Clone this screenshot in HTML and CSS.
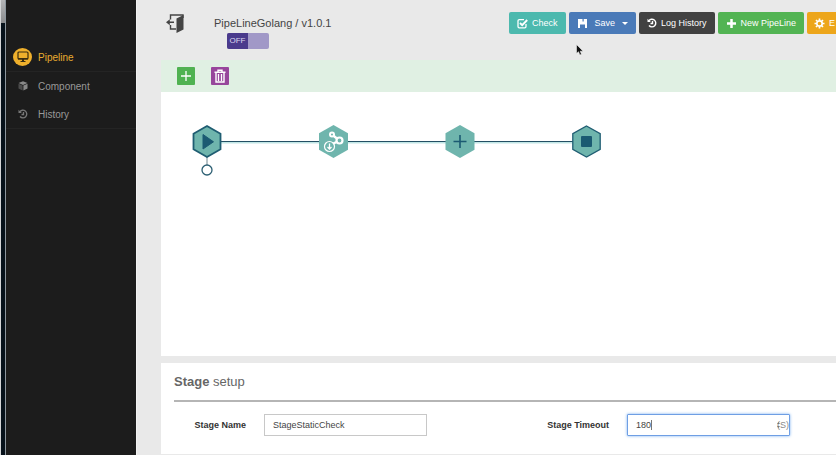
FILE: index.html
```html
<!DOCTYPE html>
<html lang="en">
<head>
<meta charset="utf-8">
<title>PipeLineGolang</title>
<link rel="stylesheet" href="styles.css">
</head>
<body>
<div class="edge"></div>
<aside class="sidebar">
  <nav class="menu">
    <a class="menu-item active" href="#">
      <span class="menu-icon"><svg width="12" height="12" viewBox="0 0 12 12"><rect x="1" y="1" width="10" height="7" rx="1" fill="none" stroke="#3a2d10" stroke-width="1.2"/><path d="M1 7h10v1.5H1zM5 8h2v2h1.5v1h-5v-1H5z" fill="#3a2d10"/></svg></span>
      Pipeline
    </a>
    <a class="menu-item" href="#">
      <span class="menu-icon"><svg width="10" height="10" viewBox="0 0 10 10"><path d="M5 .2 9.5 2 5 4 .5 2z" fill="#888"/><path d="M.5 2.8 4.6 4.6v5L.5 7.6z" fill="#4c4c4c"/><path d="M9.5 2.8 5.4 4.6v5l4.1-2z" fill="#888"/></svg></span>
      Component
    </a>
    <a class="menu-item" href="#">
      <span class="menu-icon"><svg width="10" height="10" viewBox="0 0 12 12" fill="none" stroke="#777" stroke-width="1.6"><path d="M2 3.6A4.6 4.6 0 1 1 2.4 9M6.6 3.6v3H4.2"/><path d="M.6.8v4h4z" fill="#777" stroke="none"/></svg></span>
      History
    </a>
  </nav>
</aside>
<main class="main">
  <header class="header">
    <a class="exit" href="#" aria-label="Exit"><svg width="18" height="19" viewBox="0 0 18 19"><path d="M4.500 5.500V1H17v3M4.500 11v4H10" fill="none" stroke="#444" stroke-width="1.400"/><path d="M17.500 1v14.500L10.500 19V4.500z" fill="#444"/><path d="M0 8.200l3.800-3v2.200H8V9H3.800v2.200z" fill="#444"/></svg></a>
    <div class="heading">
      <h1 class="title">PipeLineGolang / v1.0.1</h1>
      <button class="switch" type="button" role="switch" aria-checked="false"><span class="switch-off">OFF</span></button>
    </div>
    <div class="actions">
      <button class="btn teal" type="button"><svg width="11" height="11" viewBox="0 0 11 11" fill="none" stroke="#fff"><path d="M9 6v2.500a1.300 1.300 0 0 1-1.300 1.300H2.300A1.300 1.300 0 0 1 1 8.500V3a1.300 1.300 0 0 1 1.300-1.300H7" stroke-width="1.300"/><path d="M3 5l2.200 2.200L10.200 2" stroke-width="1.900"/></svg>Check</button>
      <button class="btn blue" type="button"><svg width="11" height="11" viewBox="0 0 11 11"><path d="M1 1h3v3.500h3V1h3v9H8V6.500H3V10H1z" fill="#fff"/><path d="M3 1h5v4H3z" fill="#fff"/><path d="M5.500 1h1.200v2.500H5.500z" fill="#4a7ab8"/></svg>Save<span class="caret"></span></button>
      <button class="btn dark" type="button"><svg width="10" height="10" viewBox="0 0 12 12" fill="none" stroke="#fff" stroke-width="1.700"><path d="M2 3.600A4.600 4.600 0 1 1 2.400 9M6.600 3.600v3H4.200"/><path d="M.6.8v4h4z" fill="#fff" stroke="none"/></svg>Log History</button>
      <button class="btn green" type="button"><svg width="11" height="11" viewBox="0 0 11 11"><path d="M5.500 1v9M1 5.500h9" stroke="#fff" stroke-width="2.500"/></svg>New PipeLine</button>
      <button class="btn orange" type="button"><svg width="11" height="11" viewBox="0 0 11 11" fill="none" stroke="#fff"><circle cx="5.500" cy="5.500" r="2.700" stroke-width="1.700"/><path d="M5.500.5v1.800M5.500 8.700v1.800M.5 5.500h1.800M8.700 5.500h1.800M2 2l1.200 1.200M7.800 7.800 9 9M9 2 7.800 3.200M3.200 7.800 2 9" stroke-width="1.700"/></svg>E</button>
    </div>
  </header>
  <div class="workspace">
    <div class="toolbar">
      <button class="tool add" type="button" aria-label="Add"><svg width="12" height="12" viewBox="0 0 12 12"><path d="M6 1v10M1 6h10" stroke="#fff" stroke-width="1.300"/></svg></button>
      <button class="tool remove" type="button" aria-label="Delete"><svg width="14" height="14" viewBox="0 0 14 14" fill="none" stroke="#fff"><path d="M1.500 3.200h11M5 3V1.200h4V3" stroke-width="1.400"/><path d="M3 4v9h8V4" stroke-width="1.400"/><path d="M5.500 5v7M8.500 5v7" stroke-width="1.300"/></svg></button>
    </div>
    <div class="canvas">
      <svg width="460" height="100" viewBox="0 0 460 100">
        <path d="M46 50.500h380" stroke="#c1e6e5" stroke-width="2"/>
        <path d="M46 49.500h380" stroke="#245064" stroke-width="1"/>
        <path d="M46 65v8" stroke="#70878f" stroke-width="1"/>
        <circle cx="46" cy="78" r="5" fill="#fff" stroke="#2c5f73" stroke-width="1.300"/>
        <path d="M46 34l13.500 7.700v15.600L46 65l-13.500-7.700V41.700z" fill="#6fb5ad" stroke="#1f5d72" stroke-width="1.800"/>
        <path d="M42 42.500v14.500l10.500-7.200z" fill="#1b5a72" stroke="#1b5a72" stroke-linejoin="round"/>
        <path d="M172.500 33l14.500 8.200v16.600L172.500 66 158 57.800V41.200z" fill="#6fb5ad"/>
        <g fill="none" stroke="#fff"><path d="M171.500 43l7 5.500-7 3.500" stroke-width="2.400"/><circle cx="171" cy="42.500" r="2" fill="#6fb5ad" stroke-width="2"/><circle cx="178.500" cy="48.500" r="3" fill="#6fb5ad" stroke-width="2.200"/><circle cx="168.500" cy="54.500" r="5" fill="#6fb5ad" stroke-width="1.200"/><path d="M168.500 51.500v5M166.500 55l2 2 2-2" stroke-width="1.300"/></g>
        <path d="M299 33l14.500 8.200v16.600L299 66l-14.500-8.200V41.200z" fill="#6fb5ad"/>
        <path d="M299 43v13M292.500 49.500h13" stroke="#1b5a72" stroke-width="1.600"/>
        <path d="M425.500 34l13.700 7.700v15.600L425.500 65l-13.700-7.700V41.700z" fill="#6fb5ad" stroke="#1f5d72" stroke-width="1.300"/>
        <rect x="420" y="44" width="11" height="11" rx="1" fill="#1b5a72"/>
      </svg>
    </div>
  </div>
  <section class="panel">
    <h2 class="panel-title"><strong>Stage</strong> setup</h2>
    <form class="form">
      <label for="stage-name">Stage Name</label>
      <input id="stage-name" class="input" type="text" value="StageStaticCheck">
      <label for="stage-timeout">Stage Timeout</label>
      <div class="timeout">
        <input id="stage-timeout" class="input focused" type="text" value="180">
        <span class="text-cursor"></span>
        <span class="unit">(S)</span>
        <svg class="stepper" width="3" height="8" viewBox="0 0 3 8"><path d="M0 3l1.500-2L3 3zM0 5l1.500 2L3 5z" fill="#777"/></svg>
      </div>
    </form>
  </section>
</main>
<svg class="pointer" width="8" height="12" viewBox="0 0 8 12"><path d="M.5.500v9l2-1.800 1.400 3.300 1.600-.7L4.200 7.200h2.900z" fill="#111" stroke="#fff" stroke-width=".5"/></svg>
</body>
</html>
```

FILE: styles.css
```css
* { box-sizing: border-box; }

body {
  margin: 0;
  min-height: 100vh;
  display: flex;
  background: #e9e9e9;
  font-family: "Liberation Sans", Arial, sans-serif;
  font-size: 9px;
  color: #333;
}

button, input { font: inherit; }
svg { display: block; flex: none; }

.edge {
  flex: 0 0 6px;
  border-left: 1px solid #d5d7d8;
  border-right: 1px solid #8d979e;
  background: linear-gradient(#b4b5b7, #8a8c8e 23px, #07121b 23px);
}

.sidebar {
  flex: 0 0 130px;
  background: #1c1c1c;
  padding-top: 43px;
}

.menu-item {
  display: flex;
  align-items: center;
  gap: 6px;
  height: 28px;
  padding-left: 7px;
  box-sizing: content-box;
  border-bottom: 1px solid #242424;
  color: #999;
  font-size: 10px;
  text-decoration: none;
}

.menu-item:nth-child(2) { border-bottom: 0; }
.menu-item.active { color: #e9ad30; }

.menu-icon {
  display: grid;
  place-items: center;
  width: 19px;
  height: 18px;
  border-radius: 50%;
}

.active .menu-icon { background: #efb02c; }

.main {
  flex: 1;
  min-width: 0;
  display: flex;
  flex-direction: column;
  padding-left: 24px;
  border-left: 1px solid #f2f2f2;
}

.header {
  display: flex;
  align-items: flex-start;
  height: 60px;
  padding: 12px 0 0 5px;
}

.exit { flex: 0 0 48px; padding-top: 2px; }
.heading { flex: 0 0 295px; padding-top: 4px; }

.title {
  margin: 0 0 3px;
  font-size: 11px;
  line-height: 14px;
  font-weight: normal;
  color: #444;
}

.switch {
  display: block;
  width: 42px;
  height: 16px;
  margin-left: 13px;
  padding: 0;
  border: 0;
  border-radius: 2px;
  background: #a198c7;
  overflow: hidden;
}

.switch-off {
  display: block;
  width: 21px;
  background: #4a3a8c;
  color: #ddd8f0;
  font-size: 8px;
  line-height: 16px;
  text-align: center;
}

.actions { flex: 1; display: flex; gap: 3px; }

.btn {
  display: flex;
  align-items: center;
  gap: 4px;
  height: 22px;
  padding: 0 8px;
  border: 0;
  border-radius: 2px;
  color: #fff;
  line-height: 22px;
  white-space: nowrap;
}

.teal { background: #4cb9ae; }
.blue { background: #4a7ab8; gap: 7px; }
.dark { background: #414141; }
.green { background: #52b453; }

.orange {
  flex: 1;
  padding: 0 0 0 7px;
  border-radius: 2px 0 0 2px;
  background: #eda61b;
}

.caret {
  border: 3px solid transparent;
  border-top-color: #fff;
  border-bottom: 0;
}

.workspace { flex: 1; display: flex; flex-direction: column; background: #fff; }

.toolbar {
  display: flex;
  align-items: center;
  gap: 16px;
  height: 32px;
  padding-left: 16px;
  background: #e0f0e3;
}

.tool {
  display: grid;
  place-items: center;
  width: 18px;
  height: 18px;
  padding: 0;
  border: 0;
  border-radius: 1px;
}

.add { background: #4fb251; }
.remove { background: #97469b; }

.canvas { overflow: hidden; }

.panel {
  margin: 7px 0 1px;
  padding: 11px 0 18px 13px;
  background: #fff;
}

.panel-title {
  margin: 0 0 12px;
  padding-bottom: 11px;
  border-bottom: 2px solid #b5b5b5;
  font-size: 13px;
  line-height: 15px;
  font-weight: normal;
  color: #666;
}

.form {
  display: grid;
  grid-template-columns: 72fr 163fr 164fr 163fr;
  column-gap: 18px;
  align-items: center;
  margin-right: 46px;
}

.form label { font-weight: bold; text-align: right; }

.input {
  display: block;
  width: 100%;
  height: 22px;
  padding: 0 8px;
  border: 1px solid #c8c8c8;
  background: #fff;
  color: #444;
  outline: 0;
}

.timeout { position: relative; }

.focused {
  border-color: #6f9fe4;
  border-radius: 1px;
  box-shadow: 0 0 3px #78aef0;
}

.text-cursor {
  position: absolute;
  left: 24px;
  top: 6px;
  width: 1px;
  height: 10px;
  background: #777;
}

.unit {
  position: absolute;
  right: 1px;
  top: 6px;
  line-height: 10px;
  color: #888;
}

.stepper { position: absolute; right: 10px; top: 7px; }

.pointer { position: absolute; left: 576px; top: 44px; }
```
